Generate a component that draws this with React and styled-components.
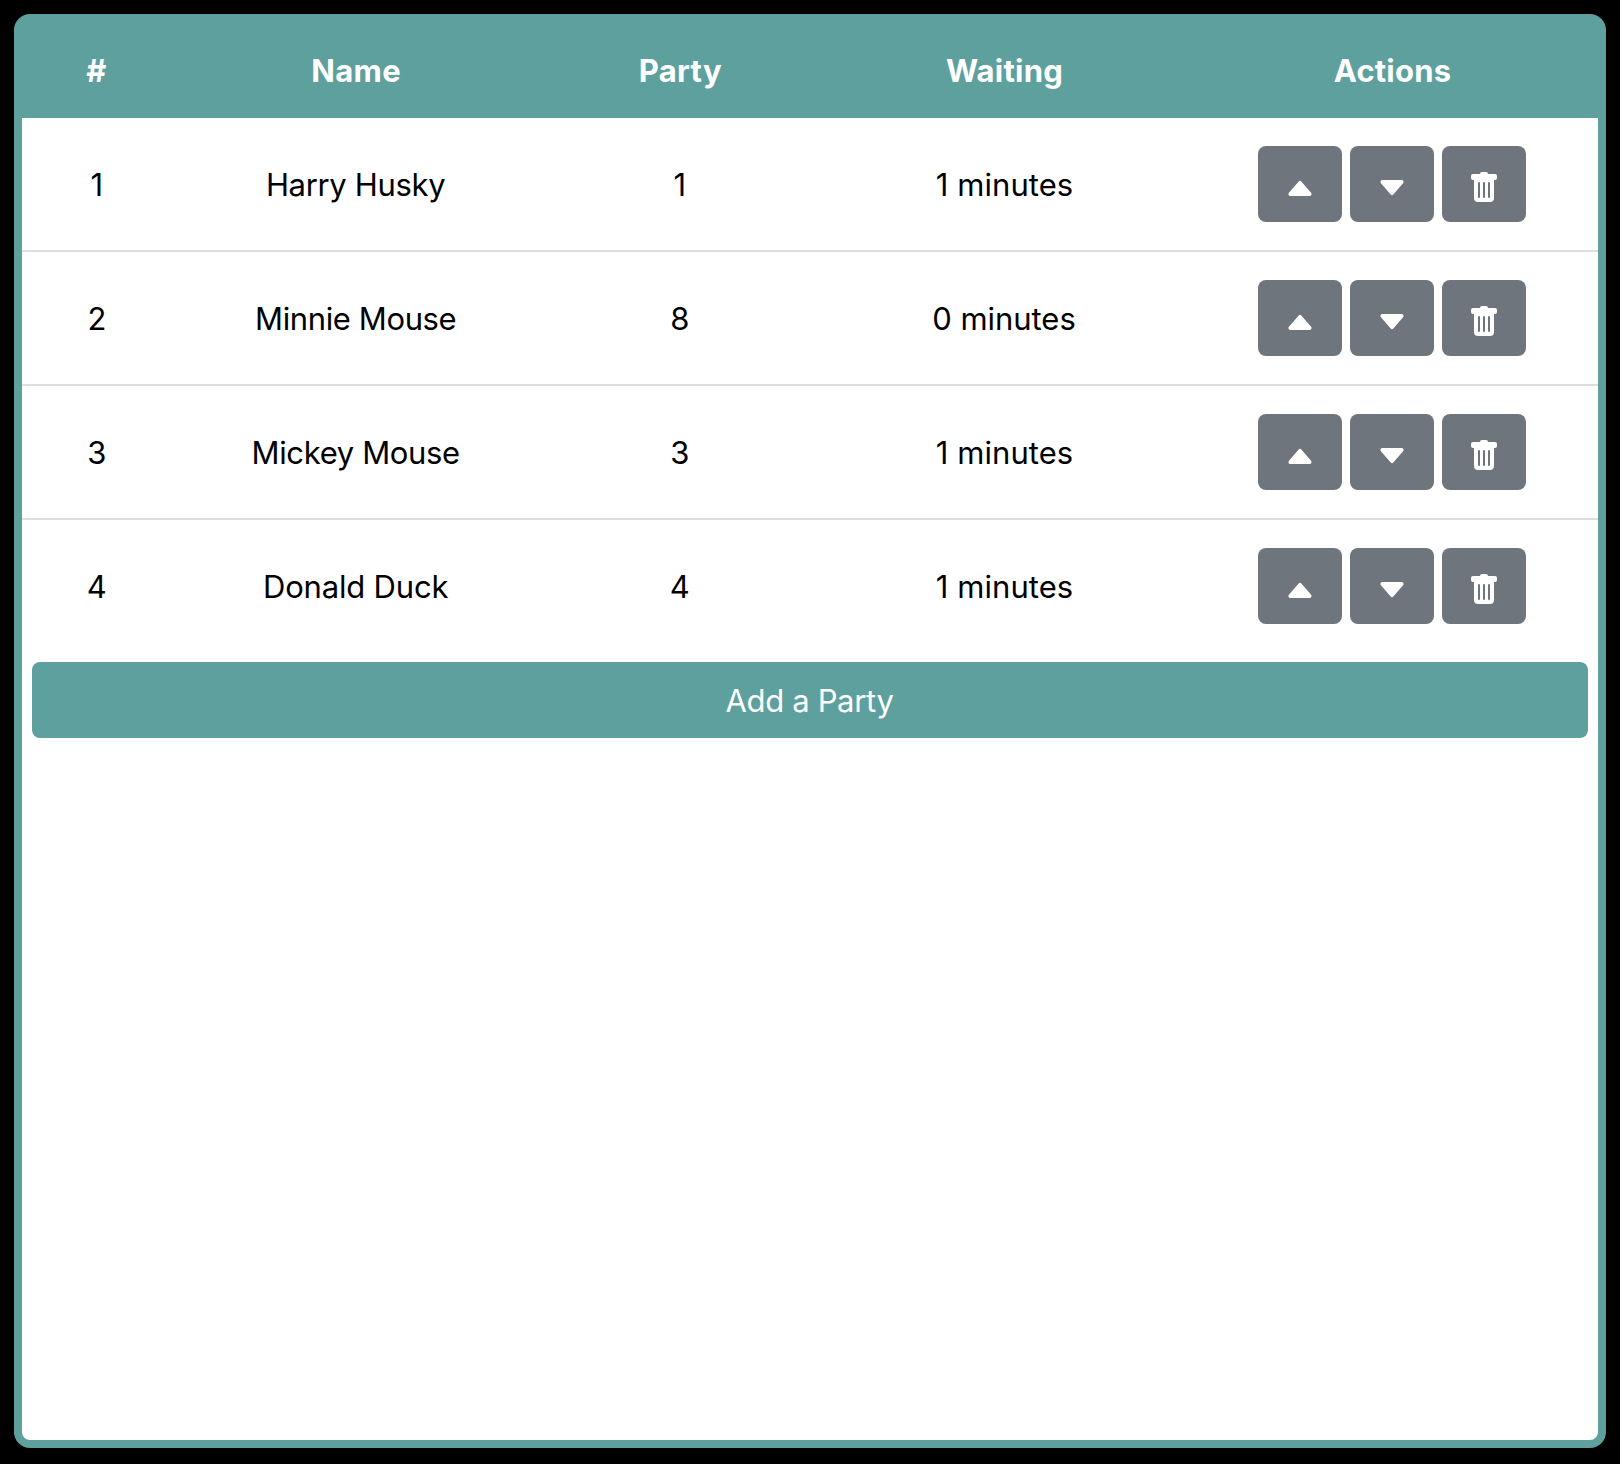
import React from "react";
import styled, { createGlobalStyle } from "styled-components";
import { BsCaretUpFill, BsCaretDownFill, BsTrashFill } from "react-icons/bs";

const TEAL = "#5ea09e";

const GlobalStyle = createGlobalStyle`
  * { box-sizing: border-box; }
  body {
    margin: 0;
    background: #000;
    font-family: Inter, Roboto, sans-serif;
    font-size: 31px;
    line-height: 48px;
    color: #000;
  }
`;

const Page = styled.main`
  height: 1464px;
  padding: 14px 14px 16px;
`;

const Card = styled.section`
  height: 100%;
  background: #fff;
  border: 8px solid ${TEAL};
  border-radius: 16px;
`;

const Row = styled.div`
  display: grid;
  grid-template-columns: 1fr 3fr 2fr 3fr 3fr;
  align-items: center;
  height: 134px;
  padding: 0 10px;
  text-align: center;
  border-bottom: 2px solid #dedede;

  &:last-child {
    height: 132px;
    border-bottom: 0;
  }
`;

const HeaderRow = styled(Row)`
  height: 96px;
  padding-top: 2px;
  border: 0;
  background: ${TEAL};
  color: #fff;
  font-weight: 700;
`;

const Text = styled.span`
  letter-spacing: ${(p) => p.$track || 0}px;
  margin-right: ${(p) => p.$shift || 0}px;
  white-space: nowrap;
`;

const Cell = styled(Text)`
  padding-top: 2px;
`;

const Actions = styled.div`
  display: flex;
  justify-content: center;
  gap: 8px;
  padding-right: 3px;
`;

const Button = styled.button`
  border: 0;
  border-radius: 8px;
  height: 76px;
  color: #fff;
  font: inherit;
`;

const IconButton = styled(Button)`
  width: 84px;
  padding: 26px 26px 18px;
  background: #6f757d;

  svg {
    display: block;
    width: 32px;
    height: 32px;
  }
`;

const AddButton = styled(Button)`
  display: block;
  width: calc(100% - 20px);
  margin: 10px;
  padding: 2px 1px 0 0;
  background: ${TEAL};
  letter-spacing: -0.33px;
`;

const parties = [
  { name: "Harry Husky", size: 1, wait: 1, track: -0.32 },
  { name: "Minnie Mouse", size: 8, wait: 0, track: -0.38 },
  { name: "Mickey Mouse", size: 3, wait: 1, track: -0.35 },
  { name: "Donald Duck", size: 4, wait: 1, track: -0.18 },
];

export default function App() {
  return (
    <Page>
      <GlobalStyle />
      <Card>
        <HeaderRow>
          <Text $shift={1}>#</Text>
          <Text $track={0.3}>Name</Text>
          <Text $track={0.3}>Party</Text>
          <Text $track={0.25}>Waiting</Text>
          <Text $track={0.2} $shift={2}>Actions</Text>
        </HeaderRow>
        <div>
          {parties.map((p, i) => (
            <Row key={p.name}>
              <Cell>{i + 1}</Cell>
              <Cell $track={p.track} $shift={1}>{p.name}</Cell>
              <Cell $shift={1}>{p.size}</Cell>
              <Cell $shift={p.wait === 1 ? 0 : 1} $track={p.wait === 1 ? 0.08 : -0.05}>{p.wait} minutes</Cell>
              <Actions>
                <IconButton aria-label="Move up"><BsCaretUpFill /></IconButton>
                <IconButton aria-label="Move down"><BsCaretDownFill /></IconButton>
                <IconButton aria-label="Remove"><BsTrashFill /></IconButton>
              </Actions>
            </Row>
          ))}
        </div>
        <AddButton>Add a Party</AddButton>
      </Card>
    </Page>
  );
}
